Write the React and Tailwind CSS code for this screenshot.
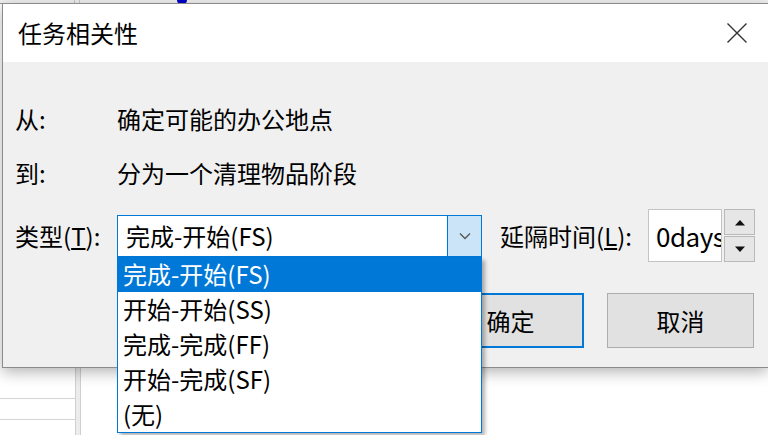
import React from 'react';

const font = { fontFamily: '"Noto Sans CJK SC", "Noto Sans", sans-serif' };

const options = ['完成-开始(FS)', '开始-开始(SS)', '完成-完成(FF)', '开始-完成(SF)', '(无)'];

const Chevron = () => (
  <svg width="12" height="8" viewBox="0 0 12 8" fill="none">
    <path d="M1 1.5 L6 6.5 L11 1.5" stroke="#555" strokeWidth="1.3" />
  </svg>
);

const Triangle = ({ up }) => (
  <svg width="12" height="7" viewBox="0 0 12 7">
    <path d={up ? 'M1 6.5 L6 1 L11 6.5 Z' : 'M1 0.5 L6 6 L11 0.5 Z'} fill="#111" />
  </svg>
);

const Background = () => (
  <div className="flex h-full w-full flex-col bg-white">
    <div className="relative flex h-[4px] bg-[#f0f0f0] border-b border-[#a0a0a0]">
      <div className="w-[75px] border-r border-[#c8c8c8]" />
      <div className="w-[5px] border-r border-[#c8c8c8]" />
      <div className="absolute left-[177px] top-[-5px] h-[10px] w-[10px] rounded-full bg-[#0000cc]" />
    </div>
    <div className="flex flex-1">
      <div className="w-[75px]">
        <div className="h-[395px] border-b border-[#d4d4d4]" />
        <div className="h-[21px] border-b border-[#d4d4d4]" />
      </div>
      <div className="w-[6px] bg-[#ececec] border-x border-[#d0d0d0]" />
      <div className="flex-1" />
    </div>
  </div>
);

export default function App() {
  return (
    <div className="relative h-[435px] w-[768px] overflow-hidden text-black" style={font}>
      <Background />

      <div className="absolute left-[2px] top-[3px] w-[766px] h-[365px] border-l border-t border-b border-[#8c8c8c] bg-[#f0f0f0] shadow-[0_4px_14px_rgba(0,0,0,0.3)] flex flex-col">
        <div className="flex h-[58px] items-center bg-white pl-[15px] pr-[20px]">
          <span className="text-[24px] leading-none">任务相关性</span>
          <svg className="ml-auto" width="22" height="22" viewBox="0 0 22 22">
            <path d="M1.5 1.5 L20.5 20.5 M20.5 1.5 L1.5 20.5" stroke="#333" strokeWidth="1.4" />
          </svg>
        </div>

        <div className="flex flex-col pt-[37px] text-[24px] leading-none">
          <div className="flex h-[40px] items-center">
            <span className="w-[114px] pl-[12px]">从:</span>
            <span>确定可能的办公地点</span>
          </div>
          <div className="mt-[14px] flex h-[40px] items-center">
            <span className="w-[114px] pl-[12px]">到:</span>
            <span>分为一个清理物品阶段</span>
          </div>

          <div className="mt-[16px] flex h-[53px] items-center">
            <span className="w-[114px] pl-[12px]">
              类型(<span className="underline underline-offset-2">T</span>):
            </span>
            <div className="relative z-10 w-[365px]">
              <div className="flex h-[42px] items-stretch border border-[#0078d7] bg-white">
                <span className="flex flex-1 items-center pl-[8px]">完成-开始(FS)</span>
                <span className="flex w-[34px] items-center justify-center border-l border-[#0078d7] bg-[#cce4f7]">
                  <Chevron />
                </span>
              </div>
              <div className="absolute left-0 top-full w-[365px] border border-t-0 border-[#0078d7] bg-white shadow-[3px_3px_4px_rgba(0,0,0,0.3)]">
                {options.map((opt, i) => (
                  <div
                    key={opt}
                    className={`flex h-[35px] items-center pl-[5px] ${i === 0 ? 'bg-[#0078d7] text-white' : ''}`}
                  >
                    {opt}
                  </div>
                ))}
              </div>
            </div>
            <span className="ml-[18px] w-[148px]">
              延隔时间(<span className="underline underline-offset-2">L</span>):
            </span>
            <div className="flex h-[53px] w-[74px] items-center overflow-hidden border border-[#c4c4c4] bg-white pl-[7px] text-[26px] tracking-[-0.5px]">
              <span className="whitespace-nowrap">0days</span>
            </div>
            <div className="ml-[2px] flex h-[53px] w-[31px] flex-col gap-[1px]">
              <div className="flex flex-1 items-center justify-center border border-[#b9b9b9] bg-[#e6e6e6]">
                <Triangle up />
              </div>
              <div className="flex flex-1 items-center justify-center border border-[#b9b9b9] bg-[#e6e6e6]">
                <Triangle />
              </div>
            </div>
          </div>

          <div className="mt-[31px] flex pl-[434px] gap-[23px]">
            <button className="flex h-[55px] w-[147px] items-center justify-center border-2 border-[#0078d7] bg-[#e1e1e1]">
              确定
            </button>
            <button className="flex h-[55px] w-[147px] items-center justify-center border border-[#adadad] bg-[#e1e1e1]">
              取消
            </button>
          </div>
        </div>
      </div>
    </div>
  );
}
